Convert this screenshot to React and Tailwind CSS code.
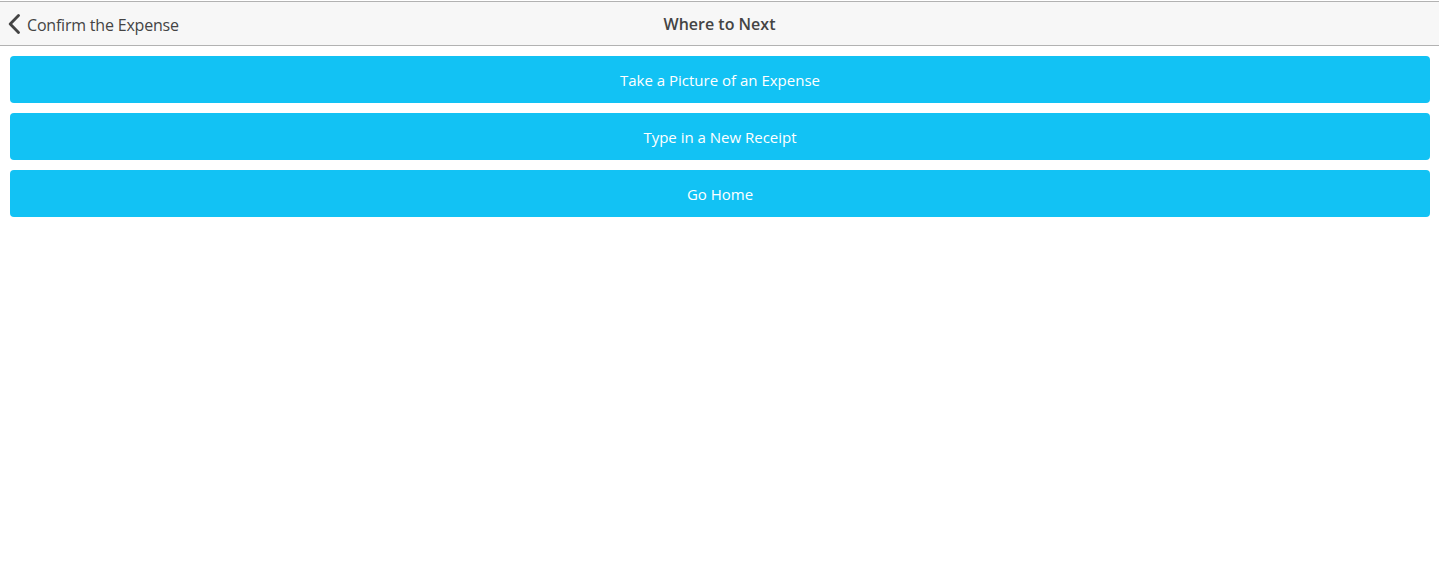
import React from 'react';

const actions = ['Take a Picture of an Expense', 'Type in a New Receipt', 'Go Home'];

const App = () => {
  return (
    <div className="min-h-[572px] bg-white pt-px" style={{ fontFamily: '"Open Sans", "Noto Sans", sans-serif' }}>
      {/* Header bar */}
      <div className="relative flex h-[45px] items-center border-y border-[#b2b2b2] bg-[#f7f7f7] pt-[2px]">
        <button className="flex items-center pl-[8px] text-[16px] text-[#444]">
          <svg width="12" height="20" viewBox="0 0 12 20" className="mr-[7px] -mt-[2px]">
            <path d="M10.5 1.5 L2.2 10 L10.5 18.5" fill="none" stroke="#444" strokeWidth="2.8" strokeLinecap="round" strokeLinejoin="round" />
          </svg>
          <span className="tracking-[-0.2px]">Confirm the Expense</span>
        </button>
        <h1 className="absolute left-1/2 top-1/2 -translate-x-1/2 -translate-y-1/2 text-[16px] font-semibold text-[#444]">Where to Next</h1>
      </div>

      {/* Actions */}
      <div className="flex flex-col gap-[10px] pl-[10px] pr-[9px] pt-[10px]">
        {actions.map((label) => (
          <button
            key={label}
            className="h-[47px] w-full rounded-[4px] bg-[#12c2f4] pt-[1px] text-[15px] text-white"
          >
            {label}
          </button>
        ))}
      </div>
    </div>
  );
};

export default App;
